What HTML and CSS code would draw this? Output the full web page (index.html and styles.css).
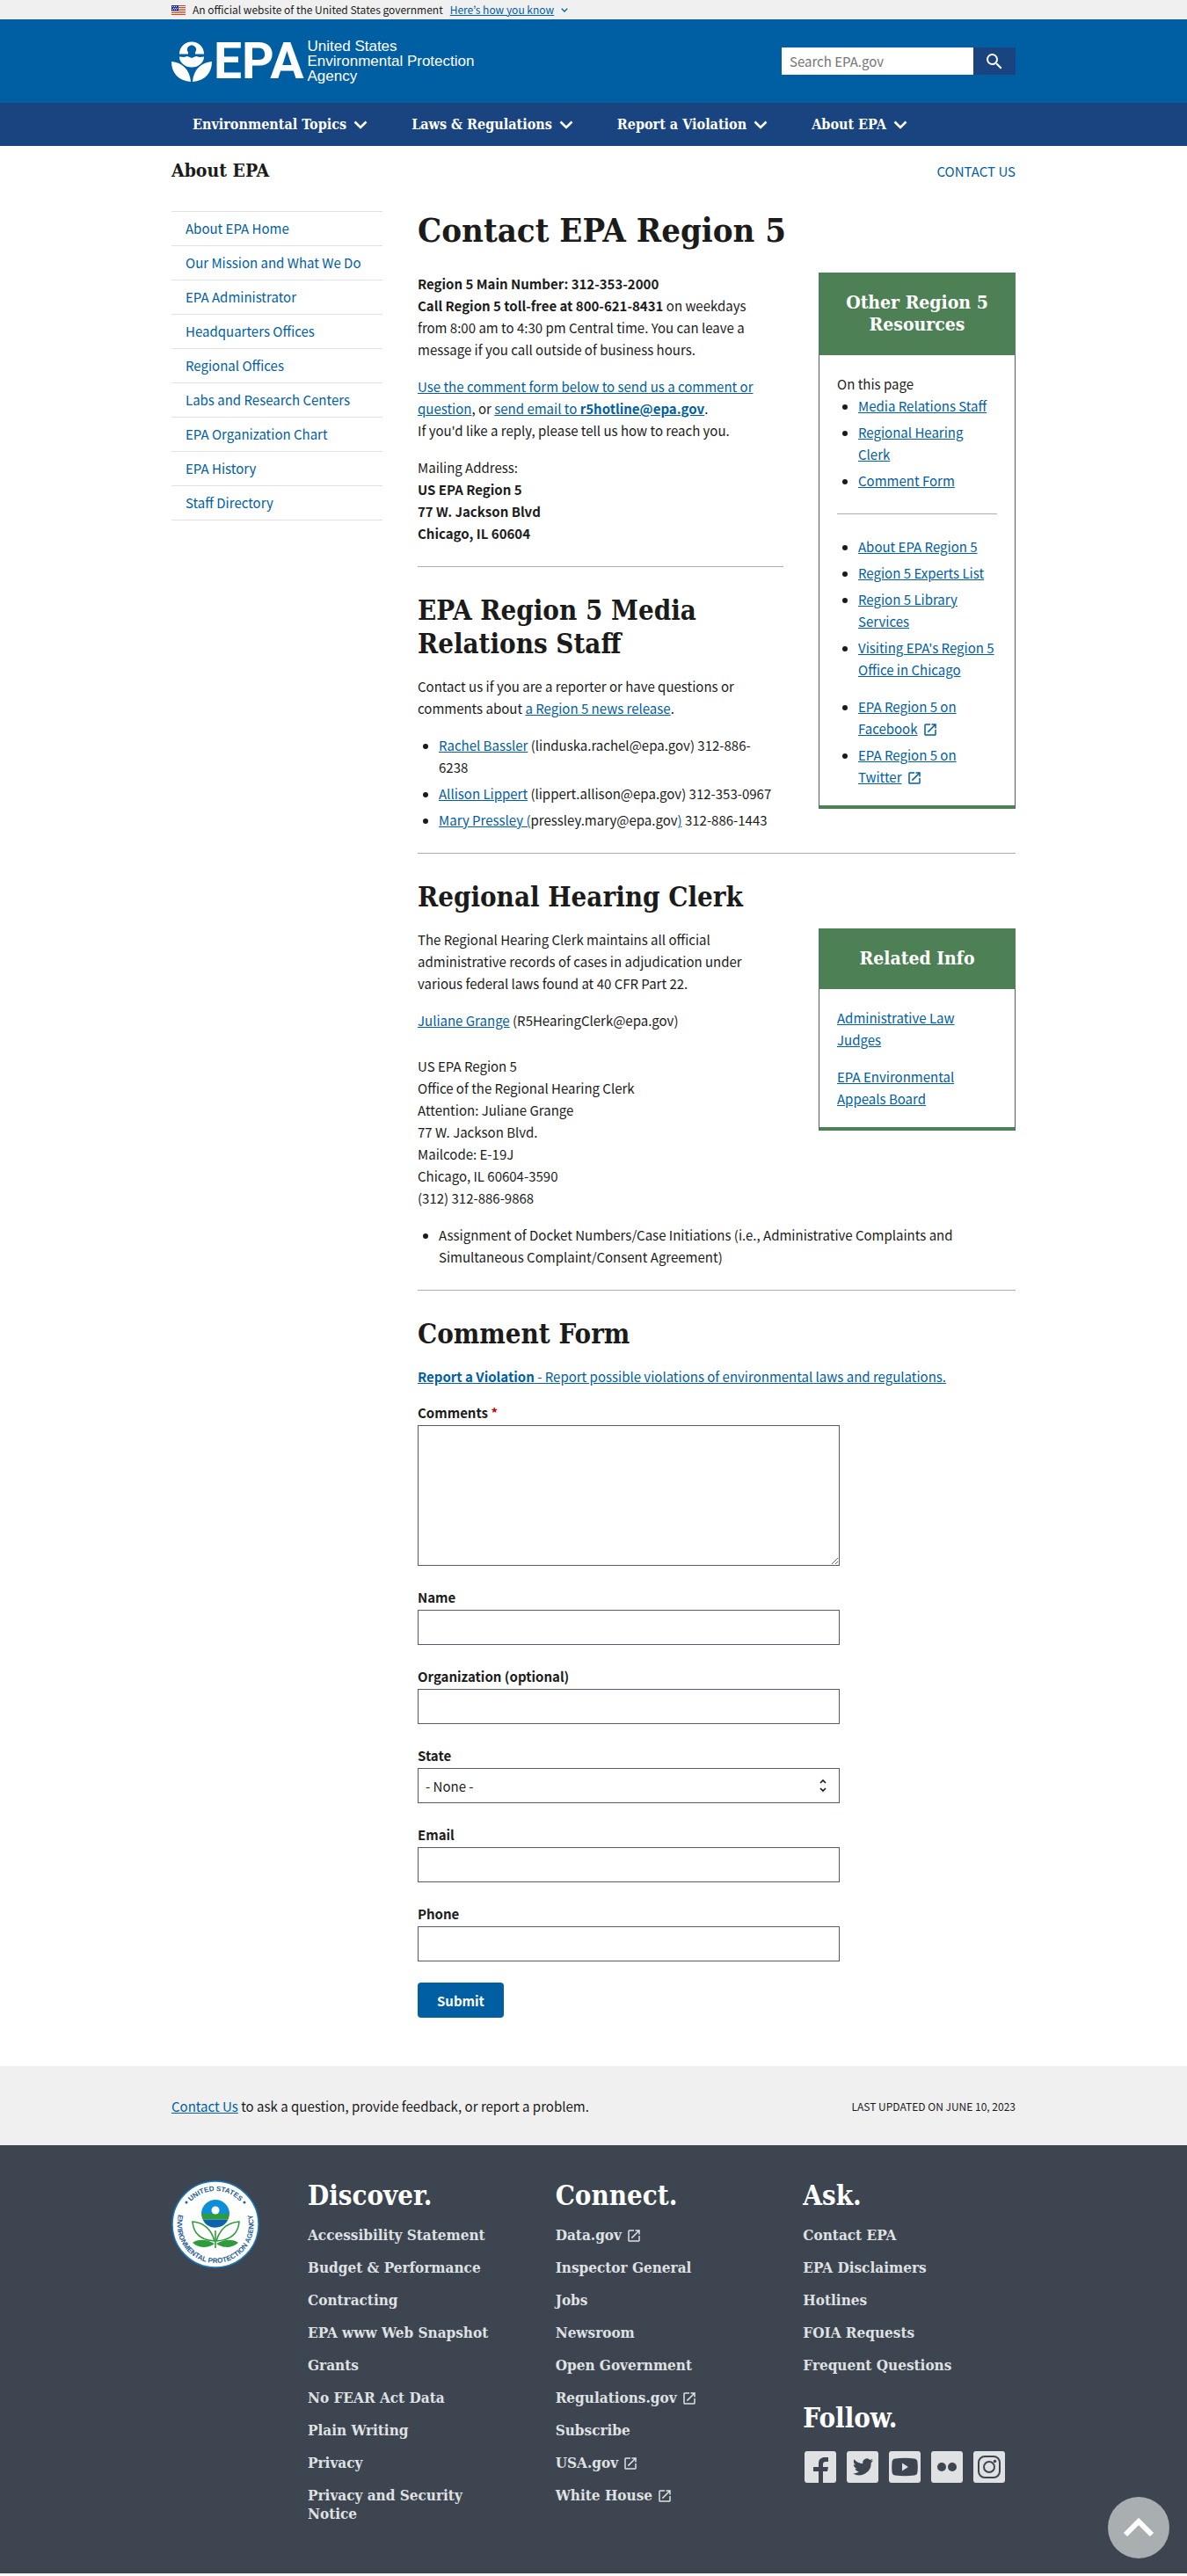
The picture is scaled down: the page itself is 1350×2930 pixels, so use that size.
FILE: index.html
```html
<!DOCTYPE html>
<html lang="en">
<head>
<meta charset="utf-8">
<title>Contact EPA Region 5 | US EPA</title>
<meta name="viewport" content="width=device-width, initial-scale=1">
<link rel="stylesheet" href="styles.css">
</head>
<body>
<svg class="sprite" aria-hidden="true">
  <symbol id="launch" viewBox="0 0 24 24"><path d="M19 19H5V5h7V3H5a2 2 0 0 0-2 2v14a2 2 0 0 0 2 2h14c1.100 0 2-.9 2-2v-7h-2v7zM14 3v2h3.590l-9.830 9.830 1.410 1.410L19 6.410V10h2V3h-7z"/></symbol>
  <symbol id="chevron" viewBox="0 0 16 10"><path d="M1.500 1.500 8 8l6.500-6.500" fill="none" stroke="currentColor" stroke-width="2.600"/></symbol>
</svg>

<div class="banner">
  <div class="container banner-row">
    <svg class="flag" viewBox="0 0 16 11" aria-hidden="true">
      <path fill="#fff" d="M0 0h16v11H0z"/>
      <path stroke="#db3e1f" d="M0 .5h16M0 2.500h16M0 4.500h16M0 6.500h16M0 8.500h16M0 10.500h16"/>
      <path fill="#1e33b1" d="M0 0h8v6H0z"/>
      <path stroke="#fff" stroke-dasharray="1 1" d="M1 1.500h6M2 3.500h5M1 5h6"/>
    </svg>
    <span>An official website of the United States government</span>
    <a href="#know">Here’s how you know</a>
    <svg class="banner-chevron" aria-hidden="true"><use href="#chevron"/></svg>
  </div>
</div>

<header>
  <div class="masthead">
    <div class="container masthead-row">
      <a class="logo" href="#home">
        <svg class="flower" viewBox="0 0 46 46" aria-hidden="true">
          <path fill="#fff" d="M9 14.500a14 14 0 0 1 28 0H27v-2a5 5 0 1 0-8 0v2zM9 17.500l5 .5 4-1 5 2 5-2 4 1 5-.5a14 12 0 0 1-28 0zM0 23c12 1 21 9 22 23C8 45 0 36 0 23zM46 23c-12 1-21 9-22 23 14-1 22-10 22-23z"/>
        </svg>
        <span class="logo-epa">EPA</span>
        <span class="logo-name">United States<br>Environmental Protection<br>Agency</span>
      </a>
      <form class="search" role="search">
        <input type="search" placeholder="Search EPA.gov" aria-label="Search EPA.gov">
        <button type="button" aria-label="Search"><svg viewBox="0 0 24 24" aria-hidden="true"><path d="M15.500 14h-.79l-.28-.27A6.470 6.470 0 0 0 16 9.500 6.500 6.500 0 1 0 9.500 16c1.610 0 3.090-.59 4.230-1.570l.27.28v.79l5 4.990L20.490 19l-4.990-5zm-6 0C7.010 14 5 11.990 5 9.500S7.010 5 9.500 5 14 7.010 14 9.500 11.990 14 9.500 14z"/></svg></button>
      </form>
    </div>
  </div>
  <nav class="primary" aria-label="Primary">
    <div class="container primary-row">
      <button type="button">Environmental Topics <svg aria-hidden="true"><use href="#chevron"/></svg></button>
      <button type="button">Laws &amp; Regulations <svg aria-hidden="true"><use href="#chevron"/></svg></button>
      <button type="button">Report a Violation <svg aria-hidden="true"><use href="#chevron"/></svg></button>
      <button type="button">About EPA <svg aria-hidden="true"><use href="#chevron"/></svg></button>
    </div>
  </nav>
</header>

<div class="container area-title">
  <span class="area-name">About EPA</span>
  <a href="#contact">CONTACT US</a>
</div>

<div class="container page">
  <nav class="sidenav" aria-label="Section">
    <a href="#home">About EPA Home</a>
    <a href="#mission">Our Mission and What We Do</a>
    <a href="#administrator">EPA Administrator</a>
    <a href="#hq">Headquarters Offices</a>
    <a href="#regional">Regional Offices</a>
    <a href="#labs">Labs and Research Centers</a>
    <a href="#chart">EPA Organization Chart</a>
    <a href="#history">EPA History</a>
    <a href="#staff">Staff Directory</a>
  </nav>

  <main>
    <h1>Contact EPA Region 5</h1>
    <div class="with-aside">
      <div>
        <p><strong>Region 5 Main Number: 312-353-2000<br>Call Region 5 toll-free at 800-621-8431</strong> on weekdays<br>from 8:00 am to 4:30 pm Central time. You can leave a<br>message if you call outside of business hours.</p>
        <p><a href="#form">Use the comment form below to send us a comment or<br>question</a>, or <a href="#mail">send email to <strong>r5hotline@epa.gov</strong></a>.<br>If you'd like a reply, please tell us how to reach you.</p>
        <p>Mailing Address:<br><strong>US EPA Region 5<br>77 W. Jackson Blvd<br>Chicago, IL 60604</strong></p>
        <hr>
        <h2 id="media">EPA Region 5 Media<br>Relations Staff</h2>
        <p>Contact us if you are a reporter or have questions or<br>comments about <a href="#news">a Region 5 news release</a>.</p>
        <ul>
          <li><a href="#rb">Rachel Bassler</a> (linduska.rachel@epa.gov) 312-886-<br>6238</li>
          <li><a href="#al">Allison Lippert</a> (lippert.allison@epa.gov) 312-353-0967</li>
          <li><a href="#mp">Mary Pressley (</a>pressley.mary@epa.gov<a href="#mp">)</a> 312-886-1443</li>
        </ul>
      </div>
      <aside class="box">
        <h3>Other Region 5 Resources</h3>
        <div class="box-body">
          <div>On this page</div>
          <ul>
            <li><a href="#media">Media Relations Staff</a></li>
            <li><a href="#clerk">Regional Hearing Clerk</a></li>
            <li><a href="#form">Comment Form</a></li>
          </ul>
          <hr>
          <ul>
            <li><a href="#r5">About EPA Region 5</a></li>
            <li><a href="#experts">Region 5 Experts List</a></li>
            <li><a href="#library">Region 5 Library Services</a></li>
            <li><a href="#visit">Visiting EPA's Region 5 Office in Chicago</a></li>
          </ul>
          <ul>
            <li><a href="#fb">EPA Region 5 on Facebook</a> <svg class="ext" aria-hidden="true"><use href="#launch"/></svg></li>
            <li><a href="#tw">EPA Region 5 on Twitter</a> <svg class="ext" aria-hidden="true"><use href="#launch"/></svg></li>
          </ul>
        </div>
      </aside>
    </div>
    <hr>
    <h2 id="clerk">Regional Hearing Clerk</h2>
    <div class="with-aside">
      <div>
        <p>The Regional Hearing Clerk maintains all official<br>administrative records of cases in adjudication under<br>various federal laws found at 40 CFR Part 22.</p>
        <p><a href="#jg">Juliane Grange</a> (R5HearingClerk@epa.gov)</p>
        <address>US EPA Region 5<br>Office of the Regional Hearing Clerk<br>Attention: Juliane Grange<br>77 W. Jackson Blvd.<br>Mailcode: E-19J<br>Chicago, IL 60604-3590<br>(312) 312-886-9868</address>
      </div>
      <aside class="box">
        <h3>Related Info</h3>
        <div class="box-body">
          <p><a href="#alj">Administrative Law Judges</a></p>
          <p><a href="#eab">EPA Environmental Appeals Board</a></p>
        </div>
      </aside>
    </div>
    <ul>
      <li>Assignment of Docket Numbers/Case Initiations (i.e., Administrative Complaints and<br>Simultaneous Complaint/Consent Agreement)</li>
    </ul>
    <hr>
    <h2 id="form">Comment Form</h2>
    <p><a href="#violation"><strong>Report a Violation</strong> - Report possible violations of environmental laws and regulations.</a></p>
    <form class="comment-form">
      <div class="field"><label for="comments">Comments <span class="required">*</span></label><textarea id="comments"></textarea></div>
      <div class="field"><label for="name">Name</label><input id="name" type="text"></div>
      <div class="field"><label for="org">Organization (optional)</label><input id="org" type="text"></div>
      <div class="field"><label for="state">State</label><select id="state"><option>- None -</option></select></div>
      <div class="field"><label for="email">Email</label><input id="email" type="email"></div>
      <div class="field"><label for="phone">Phone</label><input id="phone" type="tel"></div>
      <button class="submit" type="button">Submit</button>
    </form>
  </main>
</div>

<div class="feedback">
  <div class="container feedback-row">
    <span><a href="#contact">Contact Us</a> to ask a question, provide feedback, or report a problem.</span>
    <span class="updated">LAST UPDATED ON JUNE 10, 2023</span>
  </div>
</div>

<footer>
  <div class="container footer-grid">
    <svg class="seal" viewBox="0 0 100 100" role="img" aria-label="EPA seal">
      <defs>
        <path id="arc-top" d="M12 50a38 38 0 0 1 76 0"/>
        <path id="arc-bottom" d="M20 19a43.500 43.500 0 1 0 60 0"/>
      </defs>
      <circle cx="50" cy="50" r="49" fill="#fff" stroke="#1a78b8" stroke-width="1.500"/>
      <g class="seal-text">
        <text text-anchor="middle"><textPath href="#arc-top" startOffset="50%">UNITED STATES</textPath></text>
        <text text-anchor="middle"><textPath href="#arc-bottom" startOffset="50%">ENVIRONMENTAL PROTECTION AGENCY</textPath></text>
      </g>
      <circle cx="17" cy="25" r="1.500" fill="#1f5d96"/><circle cx="83" cy="25" r="1.500" fill="#1f5d96"/>
      <path fill="#0d8fd8" d="M34 38a16 16 0 0 1 32 0z"/>
      <path fill="#2e9b3c" d="M34 38h32a16 16 0 0 1-1.500 6.500h-29A16 16 0 0 1 34 38z"/>
      <path fill="#0b63ae" d="M35.500 44.500h29a16 16 0 0 1-29 0z"/>
      <circle cx="50" cy="34" r="4.500" fill="#fff"/>
      <path fill="none" stroke="#2e9b3c" stroke-width="1.600" d="M50 57v20"/>
      <path fill="#fff" stroke="#2e9b3c" stroke-width="1.600" d="M49 69C45 55 36 48 24 47c1 14 10 21 25 22zM51 69c4-14 13-21 26-22-1 14-11 21-26 22z"/>
      <path fill="#2e9b3c" d="M24 71c6-5 17-4 25 1-7 5-17 6-25-1zM76 71c-6-5-17-4-25 1 7 5 17 6 25-1z"/>
    </svg>
    <section>
      <h2>Discover.</h2>
      <ul>
        <li><a href="#f1">Accessibility Statement</a></li>
        <li><a href="#f2">Budget &amp; Performance</a></li>
        <li><a href="#f3">Contracting</a></li>
        <li><a href="#f4">EPA www Web Snapshot</a></li>
        <li><a href="#f5">Grants</a></li>
        <li><a href="#f6">No FEAR Act Data</a></li>
        <li><a href="#f7">Plain Writing</a></li>
        <li><a href="#f8">Privacy</a></li>
        <li><a href="#f9">Privacy and Security<br>Notice</a></li>
      </ul>
    </section>
    <section>
      <h2>Connect.</h2>
      <ul>
        <li><a href="#c1">Data.gov</a> <svg class="ext" aria-hidden="true"><use href="#launch"/></svg></li>
        <li><a href="#c2">Inspector General</a></li>
        <li><a href="#c3">Jobs</a></li>
        <li><a href="#c4">Newsroom</a></li>
        <li><a href="#c5">Open Government</a></li>
        <li><a href="#c6">Regulations.gov</a> <svg class="ext" aria-hidden="true"><use href="#launch"/></svg></li>
        <li><a href="#c7">Subscribe</a></li>
        <li><a href="#c8">USA.gov</a> <svg class="ext" aria-hidden="true"><use href="#launch"/></svg></li>
        <li><a href="#c9">White House</a> <svg class="ext" aria-hidden="true"><use href="#launch"/></svg></li>
      </ul>
    </section>
    <section>
      <h2>Ask.</h2>
      <ul>
        <li><a href="#a1">Contact EPA</a></li>
        <li><a href="#a2">EPA Disclaimers</a></li>
        <li><a href="#a3">Hotlines</a></li>
        <li><a href="#a4">FOIA Requests</a></li>
        <li><a href="#a5">Frequent Questions</a></li>
      </ul>
      <h2 class="follow">Follow.</h2>
      <div class="social">
        <a href="#s1" aria-label="Facebook"><svg viewBox="0 0 36 36"><path d="M16 36V23h-6v-5h6v-4c0-5 3-7 7-7h4v5h-3c-2 0-3 1-3 3v3h6l-1 5h-5v13z"/></svg></a>
        <a href="#s2" aria-label="Twitter"><svg viewBox="0 0 36 36"><path d="M30 10.600c-.9.400-1.800.7-2.700.8 1-.6 1.700-1.500 2.100-2.600-.9.500-1.900.9-3 1.100a4.800 4.800 0 0 0-8.100 4.400c-4-.2-7.500-2.100-9.800-5-1.300 2.200-.6 5 1.500 6.400-.8 0-1.500-.2-2.200-.6 0 2.300 1.600 4.300 3.800 4.800-.7.200-1.400.2-2.100.1.600 1.900 2.400 3.300 4.500 3.300A9.600 9.600 0 0 1 6.800 25.300a13.600 13.600 0 0 0 20.900-12.100c.9-.7 1.700-1.500 2.300-2.600z"/></svg></a>
        <a href="#s3" aria-label="YouTube"><svg viewBox="0 0 36 36"><path fill-rule="evenodd" d="M7 8.500q11-1.500 22 0 3.500.5 3.500 4.500.5 5 0 10 0 4-3.500 4.500-11 1.500-22 0-3.500-.5-3.500-4.500-.5-5 0-10 0-4 3.500-4.500zm8 5v9l7-4.500z"/></svg></a>
        <a href="#s4" aria-label="Flickr"><svg viewBox="0 0 36 36"><circle cx="12" cy="18" r="5"/><circle cx="24" cy="18" r="5"/></svg></a>
        <a href="#s5" aria-label="Instagram"><svg viewBox="0 0 36 36"><rect class="line" x="6" y="6" width="24" height="24" rx="7"/><circle class="line" cx="18" cy="18" r="6"/><circle cx="24.500" cy="11.500" r="1.800"/></svg></a>
      </div>
    </section>
  </div>
</footer>
<a class="to-top" href="#top" aria-label="Back to top"><svg viewBox="0 0 36 24" aria-hidden="true"><path d="M3 20 18 5l15 15" fill="none" stroke="#fff" stroke-width="6"/></svg></a>
</body>
</html>
```
FILE: styles.css
```css
:root {
  --sans: "Noto Sans CJK KR", "Noto Sans", sans-serif;
  --serif: "DejaVu Serif Condensed", "DejaVu Serif", "Liberation Serif", serif;
  --ink: #1b1b1b;
  --link: #005ea2;
  --gray: #a9aeb1;
}
* { box-sizing: border-box; }
body {
  margin: 0;
  background: #fff;
  color: var(--ink);
  font: 15px/25px var(--sans);
}
a { color: var(--link); }
h1, h2, h3, p, ul { margin: 0; }
h1, h2, h3 { font-family: var(--serif); font-weight: 700; }
hr { height: 1px; border: 0; background: var(--gray); }
input, select, textarea, button { font: inherit; color: inherit; border-radius: 0; }
.sprite { display: none; }
.container { max-width: 1024px; margin: 0 auto; padding: 0 32px; }

.banner { background: #f0f0f0; }
.banner-row { display: flex; align-items: center; gap: 8px; height: 22px; font-size: 12px; line-height: 22px; }
.flag { width: 16px; height: 11px; }
.banner-chevron { width: 8px; height: 5px; color: var(--link); }

.masthead { background: #005ea2; }
.masthead-row { display: flex; align-items: center; justify-content: space-between; height: 95px; }
.logo { display: flex; align-items: center; color: #fff; text-decoration: none; }
.flower { width: 46px; height: 46px; }
.logo-epa { margin: 0 4px 0 2px; font: 700 57px/46px Roboto, sans-serif; }
.logo-name { font: 17px/17px "Liberation Sans", Arial, sans-serif; }
.search { display: flex; width: 266px; height: 31px; }
.search input { flex: 1; min-width: 0; padding: 0 9px; border: 0; background: #fff; appearance: none; font-size: 15px; }
.search input::placeholder { color: #757575; }
.search button { width: 48px; padding: 0; border: 0; background: #1a4480; }
.search svg { width: 24px; height: 24px; fill: #fff; display: block; margin: 0 auto; }

.primary { background: #1a4480; }
.primary-row { display: flex; gap: 50px; height: 49px; padding-left: 56px; }
.primary button { display: flex; align-items: center; gap: 8px; padding: 0; border: 0; background: none; color: #fff; font: 700 16px/24px var(--serif); }
.primary svg { width: 16px; height: 10px; }

.area-title { display: flex; align-items: center; justify-content: space-between; height: 56px; margin-bottom: 18px; }
.area-name { font: 700 21px/28px var(--serif); }
.area-title a { text-decoration: none; }

.page { display: grid; grid-template-columns: 240px minmax(0, 1fr); column-gap: 40px; align-items: start; }
.sidenav { border-bottom: 1px solid #dfe1e2; }
.sidenav a { display: block; padding: 6px 16px 7px; border-top: 1px solid #dfe1e2; text-decoration: none; }
main { padding-bottom: 55px; }
h1 { margin-bottom: 26px; font-size: 38px; line-height: 44px; }
main h2 { margin-bottom: 17px; font-size: 31px; line-height: 38px; }
main hr { margin: 25px 0 30px; }
main p + p, p + ul, ul + ul { margin-top: 17px; }
main ul { padding-left: 24px; }
main li + li { margin-top: 5px; }
address { margin: 27px 0 17px; font-style: normal; }
.with-aside { display: grid; grid-template-columns: minmax(0, 1fr) 224px; column-gap: 40px; align-items: start; }

.box { border: 1px solid #565c65; border-top: 0; border-bottom: 4px solid #4d8055; }
.box h3 { margin: 0 -1px; padding: 21px 16px 23px; background: #4d8055; color: #fff; font-size: 21px; line-height: 25px; text-align: center; }
.box-body { padding: 20px; }
.box-body hr { margin: 25px 0 24px; }
.ext { width: 18px; height: 18px; margin-left: 2px; fill: currentColor; vertical-align: -4px; }
.box .ext { color: var(--link); }

.comment-form { max-width: 480px; margin-top: 16px; }
.field { display: grid; gap: 2px; margin-bottom: 23px; }
.field label { font-weight: 700; }
.required { color: #b50909; }
.field input, .field select, .field textarea { width: 100%; height: 40px; padding: 0 8px; border: 1px solid #565c65; background: #fff; }
.field textarea { height: 160px; }
.field select {
  appearance: none;
  background: #fff url("data:image/svg+xml,%3Csvg xmlns='http://www.w3.org/2000/svg' viewBox='0 0 8 16'%3E%3Cpath d='M1 5l3-3 3 3M1 11l3 3 3-3' fill='none' stroke='%231b1b1b' stroke-width='1.700'/%3E%3C/svg%3E") no-repeat right 14px center / 8px 16px;
}
.submit { height: 40px; margin-top: 1px; padding: 0 22px; border: 0; border-radius: 4px; background: var(--link); color: #fff; font-weight: 700; }

.feedback { background: #f0f0f0; }
.feedback-row { display: flex; align-items: center; justify-content: space-between; height: 90px; }
.updated { font-size: 12px; }

footer { background: #3d4551; color: #dfe1e2; }
.footer-grid { display: grid; grid-template-columns: 115px repeat(3, minmax(0, 1fr)); column-gap: 40px; padding-top: 38px; padding-bottom: 57px; }
.seal { width: 100px; height: 100px; margin-top: 2px; }
.seal-text { fill: #1f5d96; font: 700 8px "Liberation Sans", sans-serif; }
footer h2 { margin-bottom: 16px; color: #fff; font-size: 31px; line-height: 38px; }
footer ul { display: grid; gap: 16px; padding: 0; list-style: none; }
footer li { font: 700 17px/21px var(--serif); }
footer li a { color: inherit; text-decoration: none; }
footer .ext { margin-left: 0; }
footer .follow { margin: 30px 0 19px; }
.social { display: flex; gap: 12px; padding-left: 2px; }
.social a { width: 36px; height: 36px; border-radius: 3px; background: #dfe1e2; }
.social svg { display: block; fill: #3d4551; }
.social .line { fill: none; stroke: #3d4551; stroke-width: 2; }
.to-top { position: fixed; right: 20px; bottom: 20px; display: grid; place-items: center; width: 70px; height: 70px; border-radius: 50%; background: #a9aeb1; }
.to-top svg { width: 36px; height: 24px; }

@media (max-width: 800px) {
  .page, .with-aside, .footer-grid { grid-template-columns: minmax(0, 1fr); row-gap: 24px; }
  .masthead-row, .primary-row, .feedback-row { height: auto; flex-wrap: wrap; gap: 16px; padding-top: 16px; padding-bottom: 16px; }
}
```
